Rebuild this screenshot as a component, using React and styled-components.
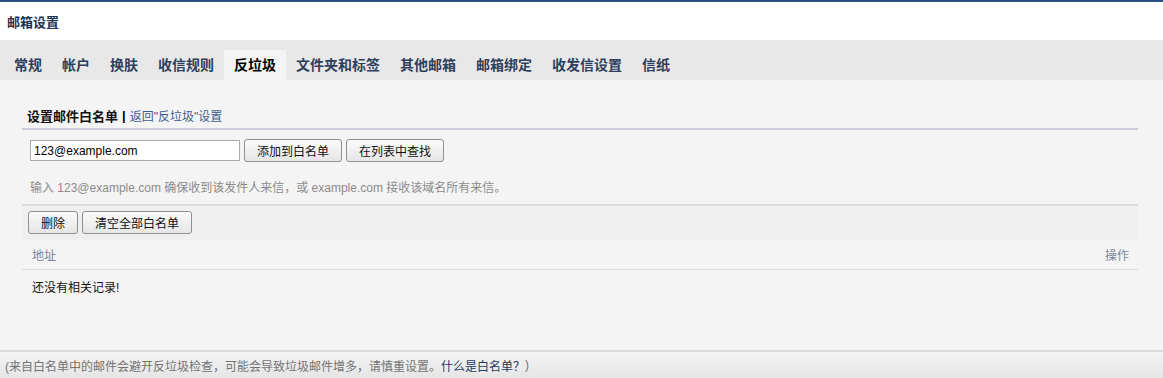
import styled, { createGlobalStyle } from 'styled-components';

const GlobalStyle = createGlobalStyle`
  html, body {
    margin: 0;
    padding: 0;
    background: #f4f4f4;
  }
  body {
    font-family: "Liberation Sans", "Noto Sans CJK SC", sans-serif;
    font-size: 12px;
    color: #000;
  }
`;

const Page = styled.div`
  width: 1163px;
  height: 378px;
  display: flex;
  flex-direction: column;
  background: #f4f4f4;
  overflow: hidden;
`;

const TopBar = styled.div`
  height: 38px;
  border-top: 2px solid #2b4f7e;
  background: #fff;
  display: flex;
  align-items: center;
  padding-left: 7px;
  font-size: 13px;
  font-weight: bold;
  color: #1e3350;
`;

const Tabs = styled.ul`
  list-style: none;
  margin: 0;
  padding: 10px 0 0 4px;
  height: 30px;
  display: flex;
  background: #e8e8e8;
`;

const Tab = styled.li`
  padding: 0 10px;
  line-height: 30px;
  font-size: 14px;
  font-weight: bold;
  color: ${p => (p.$active ? '#000' : '#2d3f5c')};
  background: ${p => (p.$active ? '#f4f4f4' : 'transparent')};
  cursor: pointer;
`;

const Main = styled.div`
  flex: 1;
  padding: 22px 25px 0 22px;
`;

const SectionHead = styled.div`
  height: 26px;
  padding-left: 5px;
  display: flex;
  align-items: center;
  border-bottom: 2px solid #c9cdd9;
  font-size: 13px;
`;

const HeadTitle = styled.b`
  color: #111;
`;

const Sep = styled.span`
  font-weight: bold;
  margin: 0 4px;
`;

const BackLink = styled.a`
  color: #3d5c8c;
  text-decoration: none;
  font-size: 12px;
  cursor: pointer;
`;

const Row = styled.div`
  display: flex;
  align-items: center;
  gap: 4px;
  padding: ${p => p.$pad || '0'};
`;

const Input = styled.input`
  width: 210px;
  height: 21px;
  box-sizing: border-box;
  border: 1px solid #a9a9a9;
  padding: 0 3px;
  font-family: "Liberation Sans", "Noto Sans CJK SC", sans-serif;
  font-size: 12px;
  color: #000;
  background: #fff;
  outline: none;
`;

const Button = styled.button`
  height: 23px;
  box-sizing: border-box;
  padding: 0 12px;
  border: 1px solid #8f8f8f;
  border-radius: 3px;
  background: linear-gradient(#fafafa, #e6e6e6);
  font-family: "Liberation Sans", "Noto Sans CJK SC", sans-serif;
  font-size: 12px;
  color: #111;
  cursor: pointer;
`;

const Hint = styled.div`
  padding: 16px 0 9px 8px;
  color: #8b8b8b;
  font-size: 12px;
  border-bottom: 2px solid #dcdcdc;
`;

const Toolbar = styled.div`
  background: #efefef;
  padding: 5px 6px 6px;
  display: flex;
  gap: 4px;
`;

const ListHead = styled.div`
  display: flex;
  justify-content: space-between;
  height: 29px;
  align-items: center;
  padding: 0 9px 0 10px;
  border-bottom: 1px solid #dddddd;
  color: #7a8699;
  font-size: 12px;
`;

const Empty = styled.div`
  padding: 8px 0 0 10px;
  font-size: 12px;
  color: #111;
`;

const Footer = styled.div`
  height: 26px;
  border-top: 2px solid #dcdcdc;
  background: linear-gradient(#f3f3f3, #e6e6e6);
  display: flex;
  align-items: center;
  padding-left: 5px;
  color: #737373;
  font-size: 12px;
`;

const FooterLink = styled.a`
  color: #263c63;
  text-decoration: none;
  cursor: pointer;
`;

const tabs = ['常规', '帐户', '换肤', '收信规则', '反垃圾', '文件夹和标签', '其他邮箱', '邮箱绑定', '收发信设置', '信纸'];

export default function App() {
  return (
    <>
      <GlobalStyle />
      <Page>
        <TopBar>邮箱设置</TopBar>
        <Tabs>
          {tabs.map(t => (
            <Tab key={t} $active={t === '反垃圾'}>{t}</Tab>
          ))}
        </Tabs>
        <Main>
          <SectionHead>
            <HeadTitle>设置邮件白名单</HeadTitle>
            <Sep>|</Sep>
            <BackLink>返回"反垃圾"设置</BackLink>
          </SectionHead>
          <Row $pad="9px 0 0 8px">
            <Input defaultValue="123@example.com" />
            <Button>添加到白名单</Button>
            <Button>在列表中查找</Button>
          </Row>
          <Hint>输入 123@example.com 确保收到该发件人来信，或 example.com 接收该域名所有来信。</Hint>
          <Toolbar>
            <Button>删除</Button>
            <Button>清空全部白名单</Button>
          </Toolbar>
          <ListHead>
            <span>地址</span>
            <span>操作</span>
          </ListHead>
          <Empty>还没有相关记录!</Empty>
        </Main>
        <Footer>
          (来自白名单中的邮件会避开反垃圾检查，可能会导致垃圾邮件增多，请慎重设置。<FooterLink>什么是白名单？</FooterLink>)
        </Footer>
      </Page>
    </>
  );
}
